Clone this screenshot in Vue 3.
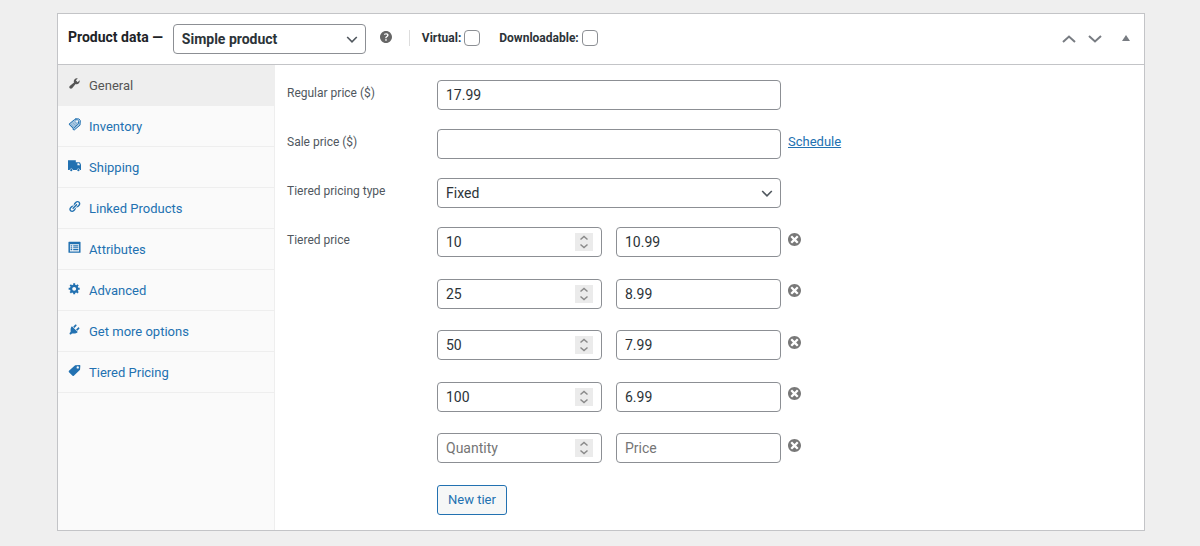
<script setup>
import { ref } from 'vue'

const productType = ref('simple')
const isVirtual = ref(false)
const isDownloadable = ref(false)
const regularPrice = ref('17.99')
const salePrice = ref('')
const pricingType = ref('fixed')
const activeTab = ref('general')

const tiers = ref([
  { id: 1, quantity: 10, price: '10.99' },
  { id: 2, quantity: 25, price: '8.99' },
  { id: 3, quantity: 50, price: '7.99' },
  { id: 4, quantity: 100, price: '6.99' },
  { id: 5, quantity: '', price: '' },
])
let nextId = 6

function addTier() {
  tiers.value.push({ id: nextId++, quantity: '', price: '' })
}
function removeTier(id) {
  tiers.value = tiers.value.filter((tier) => tier.id !== id)
}

const tabs = [
  {
    id: 'general',
    label: 'General',
    icon: 'M16.68 9.77c-1.34 1.34-3.3 1.67-4.95.99l-5.41 6.52c-.99.99-2.59.99-3.58 0s-.99-2.59 0-3.57l6.52-5.42c-.68-1.65-.35-3.61.99-4.95 1.28-1.28 3.12-1.62 4.72-1.06l-2.89 2.89 2.82 2.82 2.86-2.87c.53 1.58.18 3.39-1.08 4.65z',
  },
  { id: 'inventory', label: 'Inventory', icon: '' },
  {
    id: 'shipping',
    label: 'Shipping',
    icon: 'M0 2h12v3h5.500q.8 0 1.200.8L20 9v8h-1.500a2.500 2.500 0 0 0-5 0H7.500a2.500 2.500 0 0 0-5 0H0zM5 15.500a1.700 1.700 0 1 0 0 3.400 1.700 1.700 0 0 0 0-3.400zM16 15.500a1.700 1.700 0 1 0 0 3.400 1.700 1.700 0 0 0 0-3.400zM14.500 6.500v3h4l-1.500-3z',
  },
  {
    id: 'linked',
    label: 'Linked Products',
    icon: 'M17.74 2.76c1.68 1.69 1.68 4.41 0 6.1l-1.53 1.52c-1.12 1.12-2.7 1.47-4.14 1.09l2.62-2.61.76-.77.76-.76c.84-.84.84-2.2 0-3.04-.84-.85-2.2-.85-3.04 0l-.77.76-3.38 3.38c-.37-1.44-.02-3.02 1.1-4.14l1.52-1.53c1.69-1.68 4.42-1.68 6.1 0zM8.59 13.43l5.34-5.34c.42-.42.42-1.1 0-1.52-.44-.43-1.13-.39-1.53 0l-5.33 5.34c-.42.42-.42 1.1 0 1.52.44.43 1.13.39 1.52 0zm-.76 2.29l4.14-4.15c.38 1.44.03 3.02-1.09 4.14l-1.52 1.53c-1.69 1.68-4.41 1.68-6.1 0-1.68-1.68-1.68-4.42 0-6.1l1.53-1.52c1.12-1.12 2.7-1.47 4.14-1.1l-4.14 4.15c-.85.84-.85 2.2 0 3.05.84.84 2.2.84 3.04 0z',
  },
  {
    id: 'attributes',
    label: 'Attributes',
    icon: 'M1.500 1h17q.8 0 .8.8v15.400q0 .8-.8.8h-17q-.8 0-.8-.8V1.800q0-.8.8-.8zM3 5v11h14V5zM4 6.500h2.500v2H4zM8 6.500h8v2H8zM4 12h2.500v2.200H4zM8 12h8v2.200H8z M4 9.500h2.500v1.500H4zM8 9.500h8v1.300H8z',
  },
  {
    id: 'advanced',
    label: 'Advanced',
    icon: 'M18 12h-2.18c-.17.7-.44 1.35-.81 1.93l1.54 1.54-2.1 2.1-1.54-1.54c-.58.36-1.23.63-1.91.79V19H8v-2.18c-.68-.16-1.33-.43-1.91-.79l-1.54 1.54-2.12-2.12 1.54-1.54c-.36-.58-.63-1.23-.79-1.91H1V9.03h2.17c.16-.7.44-1.35.8-1.94L2.43 5.55l2.1-2.1 1.54 1.54c.58-.37 1.24-.64 1.93-.81V2h3v2.18c.68.16 1.33.43 1.91.79l1.54-1.54 2.12 2.12-1.54 1.54c.36.59.64 1.24.8 1.94H18V12zm-8.5 1.5c1.66 0 3-1.34 3-3s-1.34-3-3-3-3 1.34-3 3 1.34 3 3 3z',
  },
  {
    id: 'more',
    label: 'Get more options',
    icon: 'M13.11 4.36L9.87 7.6 8 5.73l3.24-3.24c.35-.34 1.05-.2 1.56.32.52.51.66 1.21.31 1.55zm-8 1.77l.91-1.12 9.01 9.01-1.19.84c-.71.71-2.63 1.16-3.82 1.16H6.14L4.9 17.26c-.59.59-1.54.59-2.12 0-.59-.58-.59-1.53 0-2.12l1.24-1.24v-3.88c0-1.13.4-3.19 1.09-3.89zm7.26 3.97l3.24-3.24c.34-.35 1.04-.21 1.55.31.52.51.66 1.21.31 1.55l-3.24 3.25z',
  },
  {
    id: 'tiered',
    label: 'Tiered Pricing',
    icon: 'M11 2L18 1.500Q19 1.500 19 2.500L18.500 9L9 18Q8 19 7 18L1.500 12.500Q.5 11.500 1.500 10.500zM15 3.500a1.800 1.800 0 1 0 0 3.600 1.800 1.800 0 0 0 0-3.600z',
  },
]
</script>

<template>
  <main class="page">
    <section class="panel">
      <header class="panel-head">
        <h2 class="title"><label for="product-type">Product data —</label></h2>
        <span class="select type-select">
          <select id="product-type" v-model="productType">
            <option value="simple">Simple product</option>
            <option value="grouped">Grouped product</option>
            <option value="variable">Variable product</option>
          </select>
          <svg viewBox="0 0 20 20" aria-hidden="true"><path d="M4 7.500L10 13.500L16 7.500" /></svg>
        </span>
        <svg class="help" viewBox="3 3 14 14" role="img" aria-label="Help">
          <path d="M17 10c0-3.87-3.14-7-7-7-3.87 0-7 3.13-7 7s3.13 7 7 7c3.86 0 7-3.13 7-7zm-6.3 1.48H9.14v-.43c0-.38.08-.7.24-.98s.46-.57.88-.89c.41-.29.68-.53.81-.71.14-.18.2-.39.2-.62 0-.25-.09-.44-.28-.58-.19-.13-.45-.19-.79-.19-.58 0-1.25.19-2 .57l-.64-1.28c.87-.49 1.8-.74 2.77-.74.81 0 1.45.2 1.92.58.48.39.71.91.71 1.55 0 .43-.09.8-.29 1.11-.19.32-.57.67-1.11 1.06-.38.28-.61.49-.71.63-.1.15-.15.34-.15.57v.35zm-1.47 2.74c-.18-.17-.27-.42-.27-.73 0-.33.08-.58.26-.75s.43-.25.77-.25c.32 0 .57.09.75.26s.27.42.27.74c0 .3-.09.55-.27.72-.18.18-.43.27-.75.27-.33 0-.58-.09-.76-.26z" />
        </svg>
        <div class="flags">
          <label>Virtual:<input v-model="isVirtual" type="checkbox" /></label>
          <label>Downloadable:<input v-model="isDownloadable" type="checkbox" /></label>
        </div>
        <div class="handles">
          <button type="button" aria-label="Move up">
            <svg viewBox="0 0 26 20"><path class="chevron" d="M7 13L13 7.500L19 13" /></svg>
          </button>
          <button type="button" aria-label="Move down">
            <svg viewBox="0 0 26 20"><path class="chevron" d="M7 7L13 12.500L19 7" /></svg>
          </button>
          <button class="toggle" type="button" aria-label="Toggle panel">
            <svg viewBox="0 0 36 20"><path d="M14 12L18 6L22 12z" /></svg>
          </button>
        </div>
      </header>

      <div class="panel-body">
        <nav class="tabs" aria-label="Product data sections">
          <a
            v-for="tab in tabs"
            :key="tab.id"
            :href="'#' + tab.id"
            :class="{ active: tab.id === activeTab }"
            @click.prevent="activeTab = tab.id"
          >
            <svg v-if="tab.id === 'inventory'" viewBox="0 0 20 20" aria-hidden="true">
              <path class="tag-fill" d="M1 9.500L10 2L17 2.500L19 5L18 11L9 19z" />
              <path class="tag-line" d="M1.500 9.500L10 2.500L15 3L16.500 8L8.500 16zM11 1L17 1.500L19 4L18.500 11L9.500 18.500L7 17" />
              <path class="tag-hatch" d="M4 9L9 14M7 7L12 12M9.500 5L14.500 10" />
              <circle class="tag-hole" cx="14" cy="5" r="1.500" />
            </svg>
            <svg v-else viewBox="0 0 20 20" aria-hidden="true">
              <path fill-rule="evenodd" :d="tab.icon" />
            </svg>
            <span>{{ tab.label }}</span>
          </a>
        </nav>

        <form class="fields" @submit.prevent>
          <div class="field">
            <label for="regular-price">Regular price ($)</label>
            <input id="regular-price" v-model="regularPrice" class="box" type="text" />
          </div>
          <div class="field">
            <label for="sale-price">Sale price ($)</label>
            <input id="sale-price" v-model="salePrice" class="box" type="text" />
            <a class="schedule" href="#schedule">Schedule</a>
          </div>
          <div class="field">
            <label for="pricing-type">Tiered pricing type</label>
            <span class="select">
              <select id="pricing-type" v-model="pricingType">
                <option value="fixed">Fixed</option>
                <option value="percentage">Percentage</option>
              </select>
              <svg viewBox="0 0 20 20" aria-hidden="true"><path d="M4 7.500L10 13.500L16 7.500" /></svg>
            </span>
          </div>
          <div class="field tier-field">
            <label for="quantity-1">Tiered price</label>
            <div class="tiers">
              <div v-for="tier in tiers" :key="tier.id" class="tier">
                <span class="number box">
                  <input
                    :id="'quantity-' + tier.id"
                    v-model="tier.quantity"
                    type="number"
                    placeholder="Quantity"
                    aria-label="Quantity"
                  />
                  <svg viewBox="0 0 18 18" aria-hidden="true"><path d="M5.500 6.500L9 3.500L12.500 6.500M5.500 11.500L9 14.500L12.500 11.500" /></svg>
                </span>
                <input v-model="tier.price" class="box" type="text" placeholder="Price" aria-label="Price" />
                <button class="remove" type="button" aria-label="Remove tier" @click="removeTier(tier.id)">
                  <svg viewBox="2 2 16 16"><path d="M10 2c4.42 0 8 3.58 8 8s-3.58 8-8 8-8-3.58-8-8 3.58-8 8-8zm5 11l-3-3 3-3-2-2-3 3-3-3-2 2 3 3-3 3 2 2 3-3 3 3z" /></svg>
                </button>
              </div>
              <button class="new-tier" type="button" @click="addTier">New tier</button>
            </div>
          </div>
        </form>
      </div>
    </section>
  </main>
</template>

<style>
body {
  margin: 0;
  background: #efefef;
}
</style>

<style scoped>
.page,
.page * {
  box-sizing: border-box;
}
.page {
  padding: 13px 55px 15px 57px;
  font-family: Roboto, "Liberation Sans", sans-serif;
  font-size: 13px;
  color: #2c3338;
}
button,
input,
select {
  margin: 0;
  font-family: inherit;
}
.panel {
  background: #fff;
  border: 1px solid #c3c4c7;
}
.panel-head {
  display: flex;
  align-items: center;
  min-height: 51px;
  padding-left: 10px;
  border-bottom: 1px solid #c3c4c7;
}
.title {
  margin: 0 10px 4px 0;
  font-size: 14px;
  line-height: 20px;
  font-weight: 700;
  color: #1d2327;
  white-space: nowrap;
}
.select {
  display: grid;
  align-items: center;
}
.select select {
  grid-area: 1 / 1;
  width: 100%;
  height: 30px;
  padding: 0 24px 0 8px;
  border: 1px solid #8c8f94;
  border-radius: 4px;
  background: #fff;
  font-size: 14px;
  color: #2c3338;
  appearance: none;
}
.select svg {
  grid-area: 1 / 1;
  justify-self: end;
  width: 16px;
  height: 16px;
  margin-right: 6px;
  fill: none;
  stroke: #50575e;
  stroke-width: 2;
  pointer-events: none;
}
.type-select {
  width: 193px;
}
.type-select select {
  font-weight: 700;
}
.help {
  width: 12px;
  height: 12px;
  margin: 0 17px 4px 14px;
  fill: #666;
}
.flags {
  display: flex;
  gap: 19px;
  margin-bottom: 2px;
  padding-left: 12px;
  border-left: 1px solid #ddd;
}
.flags label {
  display: flex;
  align-items: center;
  gap: 3px;
  font-size: 12px;
  line-height: 16px;
  font-weight: 700;
}
.flags input {
  width: 16px;
  height: 16px;
  border: 1px solid #8c8f94;
  border-radius: 4px;
  background: #fff;
  appearance: none;
}
.flags input:checked {
  background: #2271b1;
}
.handles {
  display: flex;
  margin-left: auto;
}
.handles button {
  width: 26px;
  height: 20px;
  padding: 0;
  border: 0;
  background: none;
}
.handles .toggle {
  width: 36px;
}
.handles svg {
  display: block;
  width: 100%;
  height: 20px;
  fill: #787c82;
}
.handles .chevron {
  fill: none;
  stroke: #787c82;
  stroke-width: 2;
}
.panel-body {
  display: flex;
}
.tabs {
  flex: none;
  width: 217px;
  background: #fafafa;
  border-right: 1px solid #eee;
}
.tabs a {
  display: flex;
  align-items: center;
  gap: 8px;
  padding: 11px 10px 9px;
  border-bottom: 1px solid #eee;
  line-height: 20px;
  color: #2271b1;
  text-decoration: none;
}
.tabs a.active {
  background: #eee;
  color: #555;
}
.tabs svg {
  width: 13px;
  height: 13px;
  margin-bottom: 5px;
  fill: currentColor;
}
.tabs .tag-fill {
  fill: #a7c6e0;
}
.tabs .tag-line {
  fill: none;
  stroke: currentColor;
  stroke-width: 1.5;
}
.tabs .tag-hatch {
  fill: none;
  stroke: #6ea1cb;
  stroke-width: 1;
}
.tabs .tag-hole {
  fill: #fff;
}
.fields {
  flex: 1;
  display: grid;
  gap: 19px;
  padding: 15px 12px;
}
.field {
  display: grid;
  grid-template-columns: 150px minmax(0, 344px) auto;
  justify-content: start;
  align-items: start;
}
.field > label {
  font-size: 12px;
  line-height: 26px;
  color: #50575e;
}
.box {
  width: 100%;
  height: 30px;
  padding: 0 8px;
  border: 1px solid #8c8f94;
  border-radius: 4px;
  background: #fff;
  font-size: 14px;
  color: #2c3338;
}
.schedule {
  margin-left: 7px;
  line-height: 25px;
  color: #2271b1;
}
.tier-field {
  grid-template-columns: 150px minmax(0, 364px);
}
.tiers {
  display: flex;
  flex-direction: column;
  justify-content: space-between;
  align-items: flex-start;
  min-height: 288px;
}
.tier {
  display: grid;
  grid-template-columns: minmax(0, 165px) minmax(0, 165px) auto;
  width: 100%;
  column-gap: 14px;
}
.number {
  display: flex;
  align-items: center;
}
.number input {
  flex: 1;
  min-width: 0;
  padding: 0;
  border: 0;
  outline: 0;
  background: none;
  font-size: 14px;
  color: inherit;
  appearance: textfield;
}
.number input::-webkit-inner-spin-button {
  display: none;
}
.number svg {
  flex: none;
  width: 18px;
  height: 18px;
  background: #ebebeb;
  fill: none;
  stroke: #8a8a8a;
  stroke-width: 1.5;
}
input::placeholder {
  color: #757575;
}
.remove {
  height: 24px;
  margin-left: -7px;
  padding: 0;
  border: 0;
  background: none;
}
.remove svg {
  display: block;
  width: 13px;
  height: 13px;
  fill: #787878;
}
.new-tier {
  height: 30px;
  padding: 0 10px;
  border: 1px solid #2271b1;
  border-radius: 3px;
  background: #f6f7f7;
  font-size: 13px;
  color: #2271b1;
}
</style>
